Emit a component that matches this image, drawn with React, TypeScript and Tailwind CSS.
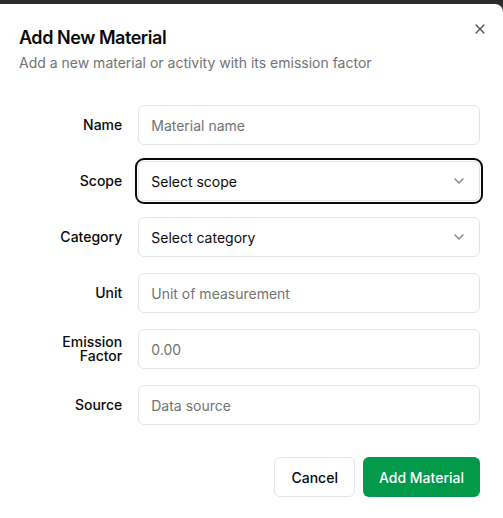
import React from "react";

function Chevron() {
  return (
    <svg width="16" height="16" viewBox="0 0 24 24" fill="none" stroke="currentColor" strokeWidth="2" strokeLinecap="round" strokeLinejoin="round" className="opacity-50">
      <path d="m6 9 6 6 6-6" />
    </svg>
  );
}

function CloseIcon() {
  return (
    <svg width="16" height="16" viewBox="0 0 24 24" fill="none" stroke="currentColor" strokeWidth="2" strokeLinecap="round" strokeLinejoin="round">
      <path d="M18 6 6 18" />
      <path d="m6 6 12 12" />
    </svg>
  );
}

function Row({ label, children }: { label: React.ReactNode; children: React.ReactNode }) {
  return (
    <div className="grid grid-cols-4 items-center gap-4">
      <label className="text-right text-[14px] leading-[14px] font-medium text-[#0a0a0a]">{label}</label>
      <div className="col-span-3">{children}</div>
    </div>
  );
}

function Input({ placeholder }: { placeholder: string }) {
  return (
    <input
      placeholder={placeholder}
      className="h-10 w-full rounded-md border border-[#e5e5e5] bg-white px-3 text-[14px] text-[#0a0a0a] placeholder:text-[#737373] outline-none"
    />
  );
}

function Select({ value, focused }: { value: string; focused?: boolean }) {
  return (
    <div
      className={
        focused
          ? "flex h-10 w-full items-center justify-between rounded-md border border-[#e5e5e5] bg-white px-3 text-[14px] text-[#0a0a0a] ring-2 ring-[#0a0a0a] ring-offset-1 ring-offset-white"
          : "flex h-10 w-full items-center justify-between rounded-md border border-[#e5e5e5] bg-white px-3 text-[14px] text-[#0a0a0a]"
      }
    >
      <span>{value}</span>
      <Chevron />
    </div>
  );
}

export default function App() {
  return (
    <div className="min-h-[518px] w-[503px] bg-[#2b2b2b] pt-[4px]" style={{ fontFamily: "Inter, 'Noto Sans', sans-serif" }}>
      <div className="relative min-h-[514px] rounded-tr-[8px] bg-white pl-[19px] pr-[23px] pt-[20px] text-[#0a0a0a]">
        <button className="absolute right-[15px] top-[17px] text-[#0a0a0a] opacity-70">
          <CloseIcon />
        </button>
        <div className="flex flex-col">
          <h2 className="text-[18px] leading-[28px] font-semibold tracking-[-0.025em]">Add New Material</h2>
          <p className="mt-[1px] text-[14px] leading-[20px] text-[#737373]">Add a new material or activity with its emission factor</p>
        </div>
        <div className="mt-[32px] flex flex-col gap-4">
          <Row label="Name">
            <Input placeholder="Material name" />
          </Row>
          <Row label="Scope">
            <Select value="Select scope" focused />
          </Row>
          <Row label="Category">
            <Select value="Select category" />
          </Row>
          <Row label="Unit">
            <Input placeholder="Unit of measurement" />
          </Row>
          <Row label={<>Emission<br />Factor</>}>
            <Input placeholder="0.00" />
          </Row>
          <Row label="Source">
            <Input placeholder="Data source" />
          </Row>
        </div>
        <div className="mt-[32px] flex justify-end gap-2">
          <button className="h-10 rounded-md border border-[#e5e5e5] bg-white px-4 text-[14px] font-medium text-[#0a0a0a]">Cancel</button>
          <button className="h-10 rounded-md bg-[#03994a] px-4 text-[14px] font-medium text-white">Add Material</button>
        </div>
      </div>
    </div>
  );
}
